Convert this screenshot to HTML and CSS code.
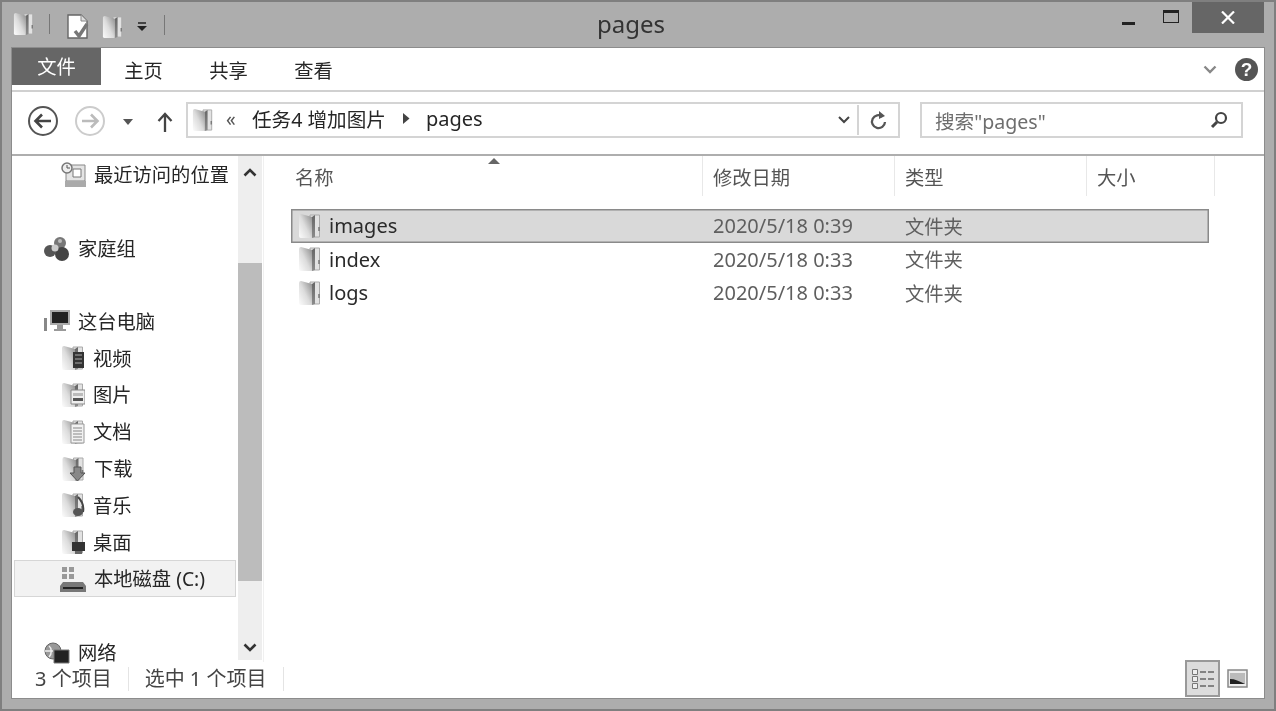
FILE: index.html
```html
<!DOCTYPE html>
<html lang="zh-CN">
<head>
    <meta charset="UTF-8">
    <title>pages</title>
    <link rel="stylesheet" href="styles.css">
</head>
<body>
    <svg class="defs" aria-hidden="true">
        <defs>
            <linearGradient id="leaf" x1="0" y1="1" x2="1" y2="0.100">
                <stop offset="0" stop-color="#fcfcfc"/>
                <stop offset="0.5" stop-color="#dcdcdc"/>
                <stop offset="1" stop-color="#929292"/>
            </linearGradient>
            <linearGradient id="spine" x1="0" y1="0" x2="0" y2="1">
                <stop offset="0" stop-color="#666"/>
                <stop offset="1" stop-color="#8c8c8c"/>
            </linearGradient>
            <symbol id="folder" viewBox="0 0 24 26">
                <path d="M12 2h9.500v22H12z" fill="#e2e2e2" stroke="#aaa"/>
                <path d="M1 3q0-2 2-2l11 3v21H3q-2 0-2-2z" fill="url(#leaf)"/>
                <path d="M14 4l3-2v22l-3 1z" fill="url(#spine)"/>
                <path d="M21 14v4" stroke="#777" stroke-width="1.500"/>
            </symbol>
        </defs>
    </svg>

    <div class="window">
        <div class="titlebar">
            <div class="qat">
                <svg class="qat-folder" width="22" height="26"><use href="#folder"/></svg>
                <span class="qat-sep qat-sep-a"></span>
                <svg class="qat-doc" width="22" height="26" viewBox="0 0 22 26">
                    <path d="M1 1h13l6 6v17H1z" fill="#fff" stroke="#666" stroke-width="1.400"/>
                    <path d="M14 1v6h6" fill="#ddd" stroke="#888"/>
                    <path d="M8 17l4 5 8-12" fill="none" stroke="#777" stroke-width="3.400"/>
                </svg>
                <svg class="qat-folder2" width="22" height="26"><use href="#folder"/></svg>
                <svg class="qat-drop" width="12" height="10" viewBox="0 0 12 10">
                    <path d="M2 1h8" stroke="#222" stroke-width="1.500"/>
                    <path d="M1 4h10L6 9z" fill="#222"/>
                </svg>
                <span class="qat-sep qat-sep-b"></span>
            </div>
            <div class="title">pages</div>
            <div class="winbtns">
                <div class="winbtn"><span class="min-bar"></span></div>
                <div class="winbtn"><span class="max-box"></span></div>
                <div class="winbtn close-btn">
                    <svg width="14" height="13" viewBox="0 0 14 13"><path d="M1 0.500l12 12M13 0.500l-12 12" stroke="#fff" stroke-width="2.200"/></svg>
                </div>
            </div>
        </div>

        <div class="explorer">
            <div class="ribbon">
                <div class="tab tab-file">文件</div>
                <div class="tab">主页</div>
                <div class="tab">共享</div>
                <div class="tab">查看</div>
                <div class="ribbon-right">
                    <svg width="14" height="9" viewBox="0 0 14 9"><path d="M1.500 1.500L7 7l5.500-5.500" fill="none" stroke="#888" stroke-width="2.400"/></svg>
                    <div class="help">?</div>
                </div>
            </div>

            <div class="addressrow">
                <svg class="nav-back" width="32" height="32" viewBox="0 0 32 32">
                    <circle cx="16" cy="16" r="14" fill="#fff" stroke="#555" stroke-width="2"/>
                    <path d="M24 16H9M15 9.500L8.500 16l6.500 6.500" fill="none" stroke="#444" stroke-width="2.600"/>
                </svg>
                <svg class="nav-fwd" width="32" height="32" viewBox="0 0 32 32">
                    <circle cx="16" cy="16" r="14" fill="#fff" stroke="#ccc" stroke-width="2"/>
                    <path d="M8 16h15M17 9.500l6.500 6.500-6.500 6.500" fill="none" stroke="#bbb" stroke-width="2.600"/>
                </svg>
                <svg class="nav-drop" width="12" height="7" viewBox="0 0 12 7"><path d="M1 0h10L6 6z" fill="#555"/></svg>
                <svg class="nav-up" width="16" height="20" viewBox="0 0 16 20">
                    <path d="M8 20V3M1.500 9L8 2l6.500 7" fill="none" stroke="#444" stroke-width="2.300"/>
                </svg>
                <div class="addressbox">
                    <svg class="addr-folder" width="22" height="26"><use href="#folder"/></svg>
                    <span class="crumb-more">«</span>
                    <span class="crumb">任务4 增加图片</span>
                    <svg class="crumb-arrow" width="7" height="11" viewBox="0 0 7 11"><path d="M0 0l6.500 5.500L0 11z" fill="#444"/></svg>
                    <span class="crumb crumb-pages">pages</span>
                    <svg class="addr-chevron" width="12" height="8" viewBox="0 0 12 8"><path d="M1 1l5 5 5-5" fill="none" stroke="#444" stroke-width="2"/></svg>
                    <div class="addr-refresh">
                        <svg width="17" height="19" viewBox="0 0 17 19">
                            <path d="M12.500 5.500A6.500 6.500 0 1 0 15 11" fill="none" stroke="#555" stroke-width="2.300"/>
                            <path d="M9 0l6 5-6 3z" fill="#555"/>
                        </svg>
                    </div>
                </div>
                <div class="searchbox">
                    <span class="search-text">搜索"pages"</span>
                    <svg width="18" height="18" viewBox="0 0 18 18">
                        <circle cx="11" cy="7" r="5" fill="none" stroke="#444" stroke-width="2.200"/>
                        <path d="M7 11l-5 5" stroke="#444" stroke-width="3"/>
                    </svg>
                </div>
            </div>

            <div class="main">
                <div class="sidebar">
                    <div class="navlist">
                        <div class="navitem child">
                            <svg class="navicon" width="25" height="26" viewBox="0 0 25 26">
                                <path d="M5 3h19v16H5z" fill="#e4e4e4" stroke="#888"/>
                                <circle cx="6" cy="6" r="5" fill="#eee" stroke="#777" stroke-width="1.500"/>
                                <path d="M6 3v3h3" fill="none" stroke="#555"/>
                                <path d="M12 7h8v8h-8z" fill="#fff" stroke="#777"/>
                                <path d="M4 19h21v6H4z" fill="#aaa"/>
                            </svg>
                            最近访问的位置
                        </div>
                        <div class="navitem top group">
                            <svg class="navicon" width="26" height="26" viewBox="0 0 26 26">
                                <circle cx="6" cy="15" r="6" fill="#555"/>
                                <circle cx="16" cy="7" r="6" fill="#777"/>
                                <circle cx="18" cy="18" r="7" fill="#444"/>
                                <circle cx="11" cy="12" r="3.500" fill="#ccc"/>
                                <circle cx="16" cy="5" r="2" fill="#bbb"/>
                            </svg>
                            家庭组
                        </div>
                        <div class="navitem top group">
                            <svg class="navicon" width="26" height="24" viewBox="0 0 26 24">
                                <path d="M6 1h20v15H6z" fill="#aaa"/>
                                <path d="M8 3h16v11H8z" fill="#222"/>
                                <path d="M13 16h6v4h3v2H10v-2h3z" fill="#999"/>
                                <path d="M0 9h3v13H0z" fill="#888"/>
                            </svg>
                            这台电脑
                        </div>
                        <div class="navitem child">
                            <svg class="navicon" width="24" height="26" viewBox="0 0 24 26">
                                <use href="#folder"/>
                                <path d="M12 7h11v16H12z" fill="#333"/>
                                <path d="M14 10h7M14 14h7M14 18h7" stroke="#aaa"/>
                            </svg>
                            视频
                        </div>
                        <div class="navitem child">
                            <svg class="navicon" width="24" height="26" viewBox="0 0 24 26">
                                <use href="#folder"/>
                                <path d="M10 8h14v14H10z" fill="#eee" stroke="#888"/>
                                <path d="M12 11h10v3H12z" fill="#bbb"/>
                                <path d="M12 16h10v3H12z" fill="#555"/>
                            </svg>
                            图片
                        </div>
                        <div class="navitem child">
                            <svg class="navicon" width="24" height="26" viewBox="0 0 24 26">
                                <use href="#folder"/>
                                <path d="M10 5h13v19H10z" fill="#f2f2f2" stroke="#999"/>
                                <path d="M12 9h9M12 12h9M12 15h9M12 18h9M12 21h9" stroke="#888"/>
                            </svg>
                            文档
                        </div>
                        <div class="navitem child">
                            <svg class="navicon" width="25" height="26" viewBox="0 0 25 26">
                                <use href="#folder"/>
                                <path d="M13 11h7v6h4l-7.500 8L9 17h4z" fill="#888" stroke="#555"/>
                            </svg>
                            下载
                        </div>
                        <div class="navitem child">
                            <svg class="navicon" width="24" height="26" viewBox="0 0 24 26">
                                <use href="#folder"/>
                                <path d="M17 5c5 5 6 10 5 15" fill="none" stroke="#444" stroke-width="2"/>
                                <ellipse cx="17" cy="20" rx="5" ry="4" fill="#555"/>
                            </svg>
                            音乐
                        </div>
                        <div class="navitem child">
                            <svg class="navicon" width="24" height="26" viewBox="0 0 24 26">
                                <use href="#folder"/>
                                <path d="M11 13h13v9H11z" fill="#333"/>
                                <path d="M14 22h7v3h-7z" fill="#666"/>
                            </svg>
                            桌面
                        </div>
                        <div class="navitem child selected">
                            <svg class="navicon" width="26" height="26" viewBox="0 0 26 26">
                                <path d="M2 1h5v5H2zM9 1h5v5H9zM2 8h5v5H2zM9 8h5v5H9z" fill="#999"/>
                                <path d="M3 16h20l3 4v6H0v-6z" fill="#777"/>
                                <path d="M3 21h20v2H3z" fill="#222"/>
                            </svg>
                            本地磁盘 (C:)
                        </div>
                        <div class="navitem top network">
                            <svg class="navicon" width="26" height="22" viewBox="0 0 26 22">
                                <circle cx="9" cy="9" r="8" fill="#999" stroke="#666"/>
                                <path d="M1 9h8M5 4c3 2 3 8 0 11" fill="none" stroke="#eee" stroke-width="1.500"/>
                                <path d="M10 8h15v13H10z" fill="#222" stroke="#777"/>
                            </svg>
                            网络
                        </div>
                    </div>
                    <div class="scrollbar">
                        <div class="scroll-arrow scroll-up">
                            <svg width="14" height="9" viewBox="0 0 14 9"><path d="M1.500 7.500L7 2l5.500 5.500" fill="none" stroke="#333" stroke-width="2.600"/></svg>
                        </div>
                        <div class="scroll-thumb"></div>
                        <div class="scroll-rest"></div>
                        <div class="scroll-arrow scroll-down">
                            <svg width="14" height="9" viewBox="0 0 14 9"><path d="M1.500 1.500L7 7l5.500-5.500" fill="none" stroke="#333" stroke-width="2.600"/></svg>
                        </div>
                    </div>
                </div>

                <div class="filepane">
                    <div class="colheads">
                        <div class="colhead colhead-name">
                            名称
                            <svg class="sort-arrow" width="12" height="6" viewBox="0 0 12 6"><path d="M6 0l6 6H0z" fill="#666"/></svg>
                        </div>
                        <div class="colhead">修改日期</div>
                        <div class="colhead">类型</div>
                        <div class="colhead">大小</div>
                    </div>
                    <div class="filerow selected-row">
                        <div class="filename"><svg width="24" height="26"><use href="#folder"/></svg>images</div>
                        <div class="cell">2020/5/18 0:39</div>
                        <div class="cell">文件夹</div>
                        <div class="cell"></div>
                    </div>
                    <div class="filerow">
                        <div class="filename"><svg width="24" height="26"><use href="#folder"/></svg>index</div>
                        <div class="cell">2020/5/18 0:33</div>
                        <div class="cell">文件夹</div>
                        <div class="cell"></div>
                    </div>
                    <div class="filerow">
                        <div class="filename"><svg width="24" height="26"><use href="#folder"/></svg>logs</div>
                        <div class="cell">2020/5/18 0:33</div>
                        <div class="cell">文件夹</div>
                        <div class="cell"></div>
                    </div>
                </div>
            </div>

            <div class="statusbar">
                <div class="status-part status-count">3 个项目</div>
                <div class="status-part status-sel">选中 1 个项目</div>
                <div class="viewbtns">
                    <div class="viewbtn active">
                        <svg width="24" height="22" viewBox="0 0 24 22">
                            <path d="M1.500 1.500h5v5h-5zM1.500 8.500h5v5h-5zM1.500 15.500h5v5h-5z" fill="#eee" stroke="#777"/>
                            <path d="M9 4h6M17 4h6M9 11h6M17 11h6M9 18h6M17 18h6" stroke="#666" stroke-width="1.500"/>
                        </svg>
                    </div>
                    <div class="viewbtn">
                        <svg width="21" height="19" viewBox="0 0 21 19">
                            <path d="M1 1h19v17H1z" fill="#eee" stroke="#888" stroke-width="1.500"/>
                            <path d="M3 4h15v11H3z" fill="#bbb"/>
                            <path d="M3 10c5 0 9 2 15 5H3z" fill="#222"/>
                        </svg>
                    </div>
                </div>
            </div>
        </div>
    </div>
</body>
</html>
```

FILE: styles.css
```css
html, body {
    margin: 0;
    padding: 0;
    overflow: hidden;
    background-color: #adadad;
}

.defs {
    display: block;
    width: 0;
    height: 0;
}

.window {
    box-sizing: border-box;
    width: 1276px;
    height: 711px;
    padding: 0 10px 11px;
    display: flex;
    flex-direction: column;
    background-color: #adadad;
    border: 2px solid #7f7f7f;
    font-family: "Noto Sans", "Noto Sans CJK SC", sans-serif;
    font-size: 19.3px;
    color: #262626;
    filter: blur(0.5px);
}

/* title bar */
.titlebar {
    height: 46px;
    flex: none;
    display: flex;
    align-items: flex-start;
}

.qat {
    width: 585px;
    height: 46px;
    flex: none;
    display: flex;
    align-items: center;
}

.qat-folder {
    margin: 0 0 2px 1px;
}

.qat-sep {
    width: 1px;
    height: 20px;
    background-color: #777;
}

.qat-sep-a {
    margin: 0 0 2px 14px;
}

.qat-doc {
    margin: 3px 0 0 17px;
}

.qat-folder2 {
    margin: 3px 0 0 13px;
}

.qat-drop {
    margin: 3px 0 0 12px;
}

.qat-sep-b {
    margin: 0 0 0 16px;
}

.title {
    font-size: 24px;
    line-height: 46px;
    margin-top: -1px;
    color: #333;
}

.winbtns {
    margin-left: auto;
    display: flex;
}

.winbtn {
    width: 42px;
    height: 31px;
    display: flex;
    align-items: center;
    justify-content: center;
}

.close-btn {
    width: 72px;
    background-color: #666;
}

.min-bar {
    width: 13px;
    height: 3px;
    margin: 11px 2px 0 0;
    background-color: #222;
}

.max-box {
    box-sizing: border-box;
    width: 16px;
    height: 13px;
    margin-top: -2px;
    border: 1.5px solid #222;
    border-top-width: 3px;
}

/* ribbon */
.explorer {
    flex: 1;
    min-height: 0;
    display: flex;
    flex-direction: column;
    background-color: #fff;
    box-shadow: 0 0 0 1px #8c8c8c;
}

.ribbon {
    height: 42px;
    flex: none;
    display: flex;
    border-bottom: 2px solid #d0d0d0;
}

.tab {
    width: 85px;
    padding-top: 8px;
    text-align: center;
    line-height: 30px;
}

.tab-file {
    width: 89px;
    height: 37px;
    padding-top: 0;
    line-height: 38px;
    background-color: #666;
    color: #fff;
}

.ribbon-right {
    margin-left: auto;
    margin-right: 6px;
    display: flex;
    align-items: center;
    gap: 18px;
}

.help {
    width: 23px;
    height: 23px;
    border-radius: 50%;
    background-color: #555;
    color: #fff;
    font-family: "Liberation Sans", sans-serif;
    font-size: 19px;
    font-weight: bold;
    line-height: 23px;
    text-align: center;
}

/* address row */
.addressrow {
    height: 64px;
    flex: none;
    box-sizing: border-box;
    padding: 10px 20px 0 15px;
    display: flex;
    align-items: flex-start;
    border-bottom: 2px solid #aeaeae;
}

.nav-back {
    margin-top: 3px;
}

.nav-fwd {
    margin: 3px 0 0 15px;
}

.nav-drop {
    margin: 17px 0 0 16px;
}

.nav-up {
    margin: 10px 0 0 23px;
}

.addressbox {
    box-sizing: border-box;
    width: 714px;
    height: 36px;
    margin-left: 13px;
    padding: 0 0 3px 4px;
    display: flex;
    align-items: center;
    border: 2px solid #d4d4d4;
}

.addr-folder {
    margin-top: 3px;
}

.crumb-more {
    margin-left: 12px;
    width: 26px;
    font-size: 19px;
    color: #555;
}

.crumb {
    font-size: 19.6px;
    white-space: nowrap;
}

.crumb-arrow {
    margin-left: 17px;
}

.crumb-pages {
    margin-left: 16px;
    font-size: 20px;
}

.addr-chevron {
    margin-left: auto;
    margin-right: 7px;
    margin-top: 3px;
}

.addr-refresh {
    width: 39px;
    height: 100%;
    margin-bottom: -3px;
    padding-top: 1px;
    display: flex;
    align-items: center;
    justify-content: center;
    border-left: 2px solid #d4d4d4;
}

.searchbox {
    box-sizing: border-box;
    width: 323px;
    height: 36px;
    margin-left: 20px;
    padding: 0 13px 0 13px;
    display: flex;
    align-items: center;
    justify-content: space-between;
    border: 2px solid #d4d4d4;
}

.search-text {
    font-size: 19.6px;
    color: #6e6e6e;
}

/* navigation pane */
.main {
    flex: 1;
    min-height: 0;
    display: flex;
}

.sidebar {
    width: 250px;
    flex: none;
    display: flex;
}

.navlist {
    width: 226px;
    flex: none;
}

.navitem {
    box-sizing: border-box;
    height: 36.8px;
    margin: 0 2px;
    padding-top: 1px;
    display: flex;
    align-items: center;
    gap: 8px;
    line-height: 1;
    white-space: nowrap;
}

.navitem.child {
    padding-left: 47px;
}

.navitem.top {
    padding-left: 30px;
}

.navitem.group {
    margin-top: 37px;
}

.navitem.group + .navitem.group {
    margin-top: 36px;
}

.navitem.network {
    margin-top: 37px;
}

.navitem.selected {
    background-color: #f2f2f2;
    border: 1px solid #d6d6d6;
    padding-left: 45px;
}

.navicon {
    flex: none;
}

.scrollbar {
    width: 24px;
    flex: none;
    height: 504px;
    display: flex;
    flex-direction: column;
    background-color: #eeeeee;
}

.scroll-arrow {
    flex: none;
    display: flex;
    align-items: center;
    justify-content: center;
}

.scroll-up {
    height: 32px;
}

.scroll-down {
    height: 26px;
}

.scroll-thumb {
    height: 318px;
    margin-top: 75px;
    flex: none;
    background-color: #bcbcbc;
}

.scroll-rest {
    flex: 1;
}

/* file list */
.filepane {
    flex: 1;
    padding-left: 27px;
    border-left: 1px solid #f0f0f0;
    margin-left: 1px;
}

.colheads {
    display: grid;
    grid-template-columns: 412px 192px 192px 128px;
    height: 40px;
    margin-bottom: 13px;
}

.colhead {
    padding: 4px 0 0 10px;
    line-height: 36px;
    color: #555;
    border-right: 1px solid #e8e8e8;
}

.colhead-name {
    position: relative;
    padding-left: 4px;
}

.sort-arrow {
    position: absolute;
    top: 2px;
    left: 197px;
}

.filerow {
    width: 918px;
    height: 33.6px;
    display: grid;
    grid-template-columns: 412px 192px 192px 1fr;
    align-items: center;
}

.selected-row {
    background-color: #d9d9d9;
    box-shadow: inset 0 0 0 1.5px #8a8a8a;
}

.filename {
    padding-left: 7px;
    display: flex;
    align-items: center;
    gap: 7px;
    font-size: 20px;
    color: #2a2a2a;
}

.cell {
    padding-left: 10px;
    font-size: 20px;
    color: #5f5f5f;
}

.cell:nth-child(3) {
    font-size: 19.3px;
}

/* status bar */
.statusbar {
    height: 36px;
    flex: none;
    display: flex;
    align-items: center;
    font-size: 20px;
    color: #444;
}

.status-part {
    height: 24px;
    margin-bottom: 3px;
    line-height: 24px;
    border-right: 1px solid #e4e4e4;
    white-space: nowrap;
}

.status-count {
    padding: 0 16px 0 23px;
}

.status-sel {
    padding: 0 17px 0 16px;
}

.viewbtns {
    align-self: flex-end;
    margin: 0 16px 1px auto;
    display: flex;
    align-items: flex-end;
    gap: 7px;
}

.viewbtn {
    display: flex;
    align-items: center;
    justify-content: center;
    padding-bottom: 9px;
}

.viewbtn.active {
    box-sizing: border-box;
    width: 35px;
    height: 37px;
    padding-bottom: 0;
    background-color: #dcdcdc;
    border: 2px solid #999;
}
```
